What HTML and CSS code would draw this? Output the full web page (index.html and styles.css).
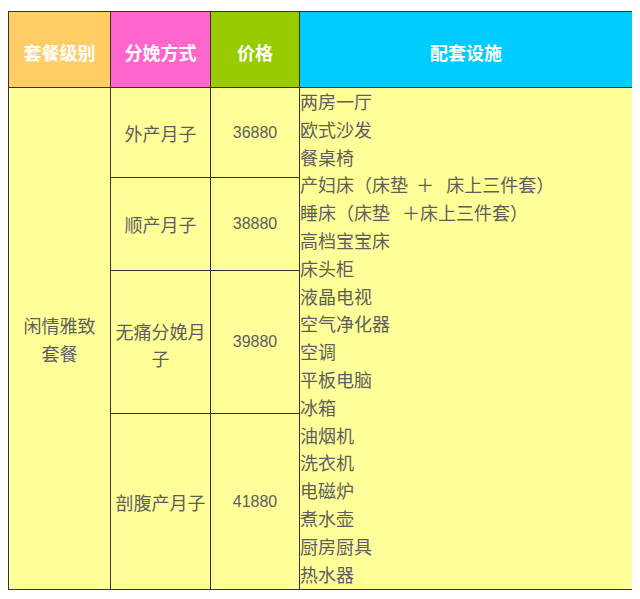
FILE: index.html
```html
<!DOCTYPE html>
<html lang="zh-CN">
<head>
<meta charset="utf-8">
<title>套餐</title>
<link rel="stylesheet" href="styles.css">
</head>
<body>
<table class="pkg">
  <colgroup>
    <col class="c1"><col class="c2"><col class="c3"><col class="c4">
  </colgroup>
  <thead>
    <tr class="head">
      <th class="h-level">套餐级别</th>
      <th class="h-mode">分娩方式</th>
      <th class="h-price">价格</th>
      <th class="h-equip">配套设施</th>
    </tr>
  </thead>
  <tbody>
    <tr class="r1">
      <td class="name" rowspan="4">闲情雅致<br>套餐</td>
      <td class="mode">外产月子</td>
      <td class="price">36880</td>
      <td class="equip" rowspan="4"><div class="list">两房一厅<br>欧式沙发<br>餐桌椅<br>产妇床（床垫&nbsp;&nbsp;＋&nbsp;&nbsp;&nbsp;床上三件套）<br>睡床（床垫&nbsp;&nbsp;&nbsp;＋床上三件套）<br>高档宝宝床<br>床头柜<br>液晶电视<br>空气净化器<br>空调<br>平板电脑<br>冰箱<br>油烟机<br>洗衣机<br>电磁炉<br>煮水壶<br>厨房厨具<br>热水器</div></td>
    </tr>
    <tr class="r2">
      <td class="mode">顺产月子</td>
      <td class="price">38880</td>
    </tr>
    <tr class="r3">
      <td class="mode">无痛分娩月子</td>
      <td class="price">39880</td>
    </tr>
    <tr class="r4">
      <td class="mode">剖腹产月子</td>
      <td class="price">41880</td>
    </tr>
  </tbody>
</table>
</body>
</html>
```
FILE: styles.css
```css
body {
  margin: 8px;
  background: #ffffff;
  font-family: "Noto Sans CJK SC", "Liberation Sans", sans-serif;
}
.pkg {
  margin-top: 3px;
  width: 624px;
  table-layout: fixed;
  border-collapse: collapse;
  border: 1px solid #222;
  font-size: 18px;
  color: #5e5e5e;
}
.c1 { width: 102px; }
.c2 { width: 100px; }
.c3 { width: 89px; }
.c4 { width: 333px; }
.pkg th, .pkg td {
  border: 1px solid #333;
  padding: 0 1px;
}
.head { height: 76px; }
.head th {
  color: #fff;
  font-weight: bold;
  padding-top: 5px;
  text-align: center;
  vertical-align: middle;
}
.h-level { background: #ffcc66; }
.h-mode { background: #ff66cc; }
.h-price { background: #99cc00; }
.h-equip { background: #00ccff; }
.pkg td { background: #ffff99; }
.r1 { height: 90px; }
.r2 { height: 93px; }
.r3 { height: 143px; }
.r4 { height: 176px; }
.name, .mode {
  text-align: center;
  vertical-align: middle;
  line-height: 28px;
}
.name { padding-top: 4px; }
.r3 .mode { padding-top: 6px; line-height: 27px; }
.price {
  text-align: center;
  vertical-align: middle;
  font-family: "Liberation Sans", sans-serif;
  font-size: 16px;
}
.equip {
  vertical-align: top;
  text-align: left;
  line-height: 27.8px;
  padding: 2px 0 0 0;
  white-space: nowrap;
}
.list {
  margin-left: -1px;
}
```
